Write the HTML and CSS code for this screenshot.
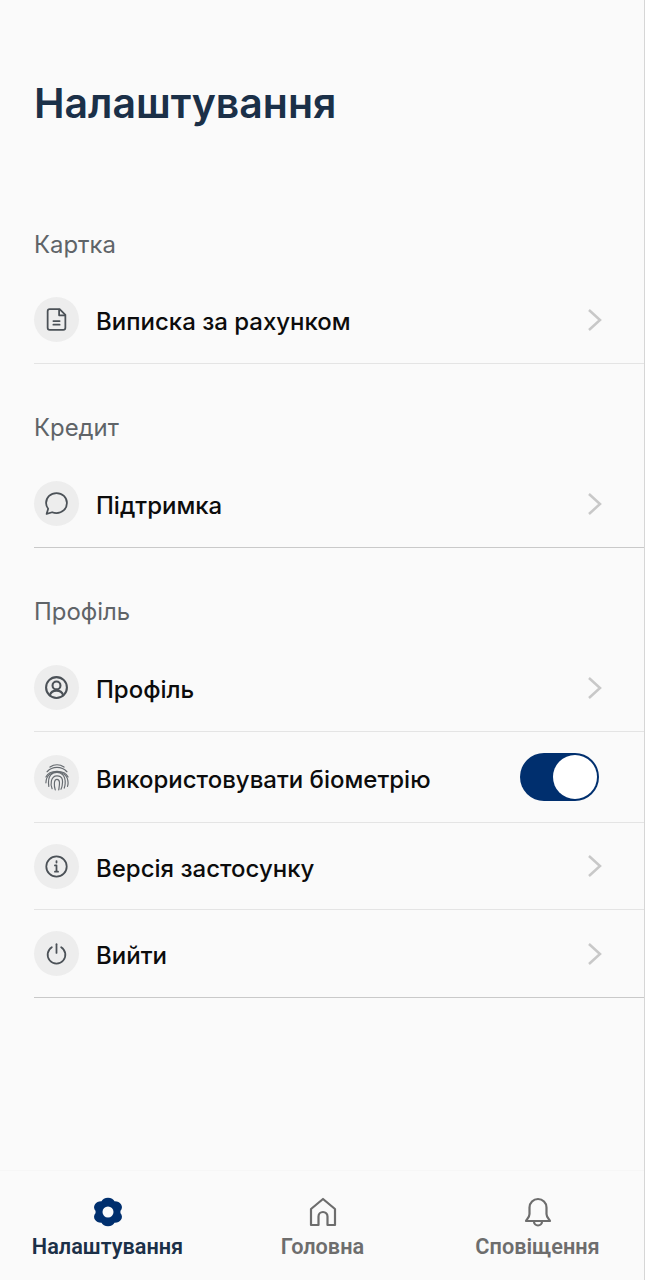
FILE: index.html
```html
<!DOCTYPE html>
<html>
<head>
    <title>Налаштування</title>
    <link rel="stylesheet" href="styles.css">
</head>
<body>
    <div id="screen">
        <h1 class="title">Налаштування</h1>

        <div class="section section-first">
            <div class="section-label">Картка</div>
            <div class="row">
                <span class="row-icon">
                    <svg viewBox="0 0 24 24"><path d="M5.500 2H15l5.500 5.500V20a2 2 0 0 1-2 2h-13a2 2 0 0 1-2-2V4a2 2 0 0 1 2-2z"/><path d="M14.500 2.500V8h5.500M9 13.500h6M9 17h6"/></svg>
                </span>
                <span class="row-text">Виписка за рахунком</span>
                <svg class="chevron" viewBox="0 0 16 24"><path d="M2 2l11 10L2 22"/></svg>
            </div>
        </div>

        <div class="section">
            <div class="section-label">Кредит</div>
            <div class="row row-strong">
                <span class="row-icon">
                    <svg viewBox="0 0 24 24"><path d="M12 2c5.600 0 10 4.200 10 9.600s-4.400 9.600-10 9.600c-1.500 0-2.900-.3-4.200-.8L2.500 22l1.500-5c-1.300-1.500-2-3.400-2-5.400C2 6.200 6.400 2 12 2z"/></svg>
                </span>
                <span class="row-text">Підтримка</span>
                <svg class="chevron" viewBox="0 0 16 24"><path d="M2 2l11 10L2 22"/></svg>
            </div>
        </div>

        <div class="section">
            <div class="section-label">Профіль</div>
            <div class="row">
                <span class="row-icon">
                    <svg class="bold" viewBox="0 0 24 24"><circle cx="12" cy="12" r="10"/><circle cx="12" cy="10" r="3.800"/><path d="M5.500 19.500c1-3 3.500-4.500 6.500-4.500s5.500 1.500 6.500 4.500"/></svg>
                </span>
                <span class="row-text">Профіль</span>
                <svg class="chevron" viewBox="0 0 16 24"><path d="M2 2l11 10L2 22"/></svg>
            </div>
            <div class="row row-tall">
                <span class="row-icon">
                    <svg class="thin" viewBox="0 0 24 24"><path d="M6 3.500c3.600-2.600 8.400-2.600 12 0"/><path d="M3.500 7.500c4.500-5 12.500-5 17 0"/><path d="M2.500 12c3-6.500 16-6.500 19 0"/><path d="M2.500 17c0-12.500 19-12.500 19 0 0 1.200-.2 2.200-.5 3"/><path d="M5 20c-1.500-10 3.500-12 7-12s7.500 2.500 7 9.500c-.1 1.500-.3 2.700-.8 4"/><path d="M7.800 22c-1.500-3-1.500-11 4.200-11s5 5.500 4.400 8.500c-.2 1-.5 2-1 3"/><path d="M10.500 23c-1-3-1.500-9 1.500-9s2.200 4.500 1.500 9"/></svg>
                </span>
                <span class="row-text">Використовувати біометрію</span>
                <span class="toggle"><span class="knob"></span></span>
            </div>
            <div class="row row-short">
                <span class="row-icon">
                    <svg viewBox="0 0 24 24"><circle cx="12" cy="12" r="9.800"/><path d="M10.500 11H12v6M10.500 17h3"/><path d="M12 6.800v1.400"/></svg>
                </span>
                <span class="row-text">Версія застосунку</span>
                <svg class="chevron" viewBox="0 0 16 24"><path d="M2 2l11 10L2 22"/></svg>
            </div>
            <div class="row row-strong">
                <span class="row-icon">
                    <svg viewBox="0 0 24 24"><path d="M12 3v8.500"/><path d="M7.500 6a8.500 8.500 0 1 0 9 0"/></svg>
                </span>
                <span class="row-text">Вийти</span>
                <svg class="chevron" viewBox="0 0 16 24"><path d="M2 2l11 10L2 22"/></svg>
            </div>
        </div>

        <div id="tabbar">
            <div class="tab tab-active">
                <svg class="tab-icon" viewBox="0 0 32 32"><path class="gear" transform="translate(16 16) scale(1.02 .9) translate(-16 -16)" d="M16 1.500c2.800 0 4.600 1.500 5.600 3.700 2.400-.3 4.700.3 6.100 2.700 1.400 2.400.7 4.700-.7 6.600v3c1.400 1.900 2.100 4.200.7 6.600-1.400 2.400-3.700 3-6.100 2.700-1 2.200-2.800 3.700-5.600 3.700s-4.600-1.500-5.600-3.700c-2.400.3-4.700-.3-6.100-2.700-1.400-2.400-.7-4.700.7-6.600v-3c-1.400-1.900-2.100-4.200-.7-6.600 1.400-2.400 3.700-3 6.100-2.700 1-2.200 2.800-3.700 5.600-3.700z"/><circle class="gear-hole" cx="16" cy="16" r="5.500"/></svg>
                <span class="tab-label">Налаштування</span>
            </div>
            <div class="tab">
                <svg class="tab-icon" viewBox="0 0 32 32"><path d="M4 29V13L16 3l12 10v16h-7.500v-8.500a4.500 4.500 0 0 0-9 0V29z"/></svg>
                <span class="tab-label">Головна</span>
            </div>
            <div class="tab">
                <svg class="tab-icon" viewBox="0 0 32 32"><path d="M4 25c0-1.500 3.500-3 3.500-7v-6.500a8.500 8.500 0 0 1 17 0V18c0 4 3.500 5.500 3.500 7z"/><path d="M12 25.500a4 4 0 0 0 8 0"/></svg>
                <span class="tab-label">Сповіщення</span>
            </div>
        </div>
    </div>
</body>
</html>
```

FILE: styles.css
```css
* {
  box-sizing: border-box;
}

body {
  margin: 0;
  background-color: #fafafa;
  font-family: Inter, "Noto Sans", sans-serif;
}

#screen {
  height: 1280px;
  display: flex;
  flex-direction: column;
  padding-top: 78px;
  border-right: 1px solid #d6d6d6;
  overflow: hidden;
}

.title {
  margin: 0 0 0 34px;
  font-size: 41px;
  line-height: 50px;
  font-weight: 600;
  color: #1b3048;
}

.section {
  margin-left: 34px;
  padding-top: 50px;
}

.section-first {
  margin-top: 53px;
}

.section-label {
  font-size: 23.900px;
  line-height: 28px;
  color: #5f6468;
  margin-bottom: 18px;
}

.section-first .section-label {
  margin-bottom: 17px;
}

.row {
  display: flex;
  align-items: center;
  height: 88px;
  border-bottom: 1px solid #e4e4e4;
  padding-right: 41px;
}

.row-tall {
  height: 91px;
}

.row-short {
  height: 87px;
}

.row-strong {
  border-bottom-color: #c9c9c9;
}

.row-icon {
  width: 45px;
  height: 45px;
  border-radius: 50%;
  background-color: #ededed;
  display: flex;
  align-items: center;
  justify-content: center;
  flex-shrink: 0;
}

.row-icon svg {
  width: 25px;
  height: 25px;
  fill: none;
  stroke: #4b5157;
  stroke-width: 1.700;
  stroke-linecap: round;
  stroke-linejoin: round;
}

.row-icon svg.bold {
  stroke-width: 2;
}

.row-icon svg.thin {
  width: 28px;
  height: 28px;
  stroke: #666b70;
  stroke-width: 1;
}

.row-text {
  margin-left: 17px;
  padding-top: 4px;
  flex: 1;
  font-size: 24px;
  font-weight: 500;
  color: #0c0c0c;
}

.chevron {
  width: 16px;
  height: 24px;
  fill: none;
  stroke: #c8c8c8;
  stroke-width: 2.500;
}

.toggle {
  width: 79px;
  height: 48px;
  border-radius: 24px;
  background-color: #002f6e;
  margin-right: 4px;
  margin-left: -20px;
  display: flex;
  align-items: center;
  justify-content: flex-end;
  padding-right: 2px;
}

.knob {
  width: 44px;
  height: 44px;
  border-radius: 50%;
  background-color: #fff;
}

#tabbar {
  margin-top: auto;
  margin-right: -1px;
  height: 110px;
  display: flex;
  padding-top: 25px;
  border-top: 1px solid #f6f6f6;
}

.tab {
  flex: 1;
  display: flex;
  flex-direction: column;
  align-items: center;
  color: #6d6d6d;
}

.tab-icon {
  width: 32px;
  height: 32px;
  fill: none;
  stroke: #6d6d6d;
  stroke-width: 2.200;
  stroke-linejoin: round;
  stroke-linecap: round;
}

.tab-icon .gear {
  fill: #002f6e;
  stroke: #002f6e;
  stroke-width: 2.400;
}

.tab-icon .gear-hole {
  fill: #fafafa;
  stroke: none;
}

.tab-label {
  margin-top: 6px;
  font-size: 21.700px;
  line-height: 26px;
  font-weight: 600;
  font-family: Roboto, Inter, sans-serif;
}

.tab-active {
  color: #1b3048;
}
```
